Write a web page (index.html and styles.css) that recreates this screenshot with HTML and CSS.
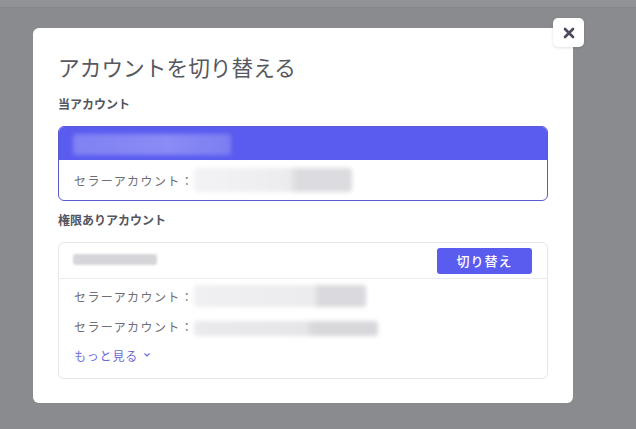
FILE: index.html
```html
<!DOCTYPE html>
<html lang="ja">
<head>
<meta charset="utf-8">
<link rel="stylesheet" href="styles.css">
</head>
<body>
<div class="topbar"></div>
<div class="stage">
  <div class="modal">
    <button class="close" aria-label="close">
      <svg width="12" height="12" viewBox="0 0 12 12"><path d="M2 2L10 10M10 2L2 10" stroke="#4a4a5a" stroke-width="2.6" stroke-linecap="round"/></svg>
    </button>
    <h1 class="title">アカウントを切り替える</h1>
    <div class="label">当アカウント</div>
    <div class="card current">
      <div class="card-head purple"><span class="blur blur-name"></span></div>
      <div class="row first"><span class="key">セラーアカウント：</span><span class="blur blur-a"></span></div>
    </div>
    <div class="label second">権限ありアカウント</div>
    <div class="card other">
      <div class="card-head plain">
        <span class="blur blur-gray"></span>
        <button class="switch">切り替え</button>
      </div>
      <div class="rows">
        <div class="row"><span class="key">セラーアカウント：</span><span class="blur blur-b"></span></div>
        <div class="row"><span class="key">セラーアカウント：</span><span class="blur blur-c"></span></div>
        <div class="more">もっと見る <svg width="8" height="6" viewBox="0 0 8 6"><path d="M1.5 1.5L4 4L6.5 1.5" fill="none" stroke="#6b6bd8" stroke-width="1.2"/></svg></div>
      </div>
    </div>
  </div>
</div>
</body>
</html>
```
FILE: styles.css
```css
html, body {
  margin: 0;
  padding: 0;
  background: #898b8f;
  width: 636px;
  height: 429px;
  overflow: hidden;
  font-family: "Noto Sans CJK JP", "Noto Sans", sans-serif;
}
.topbar {
  height: 7px;
  background: #909296;
  border-bottom: 1px solid #84868a;
}
.stage {
  padding: 20px 0 0 33px;
}
.modal {
  position: relative;
  width: 540px;
  height: 375px;
  box-sizing: border-box;
  background: #fff;
  border-radius: 6px;
  padding: 24px 25px 0 25px;
}
.close {
  position: absolute;
  top: -10px;
  right: -11px;
  width: 31px;
  height: 29px;
  border: none;
  border-radius: 5px;
  background: #fff;
  display: flex;
  align-items: center;
  justify-content: center;
  padding: 0;
  box-shadow: 0 1px 3px rgba(0,0,0,0.12);
}
.title {
  margin: 0;
  font-size: 21.7px;
  font-weight: 400;
  color: #58585f;
  line-height: 30px;
  height: 30px;
}
.label {
  margin-top: 14px;
  font-size: 12px;
  font-weight: 700;
  color: #55555f;
  line-height: 16px;
}
.label.second {
  margin-top: 11px;
}
.card {
  margin-top: 14px;
  border-radius: 6px;
  overflow: hidden;
  background: #fff;
}
.card.current {
  border: 1px solid #5b5bd0;
  height: 75px;
  box-sizing: border-box;
}
.card-head.purple {
  background: #5a5cf0;
  height: 33px;
  display: flex;
  align-items: center;
  padding-left: 14px;
}
.blur {
  display: inline-block;
  filter: blur(2px);
  border-radius: 3px;
}
.blur-name {
  width: 158px;
  height: 21px;
  background: linear-gradient(90deg, #8081f3, #8a8bf5 60%, #7c7df2);
  margin-top: 2px;
}
.row {
  display: flex;
  align-items: center;
  height: 30px;
  padding-left: 15px;
}
.row.first {
  height: 40px;
}
.key {
  font-size: 12px;
  color: #6e6e76;
  letter-spacing: 1.4px;
}
.blur-a {
  width: 158px;
  height: 24px;
  background: linear-gradient(90deg, #f3f3f5 0%, #ececef 60%, #dcdce0 65%, #dcdce0 100%);
}
.card.other {
  margin-top: 14px;
  border: 1px solid #e6e6ea;
  height: 137px;
  box-sizing: border-box;
}
.card-head.plain {
  height: 35px;
  display: flex;
  align-items: center;
  justify-content: space-between;
  padding: 0 15px 0 14px;
  border-bottom: 1px solid #ececf0;
}
.blur-gray {
  width: 84px;
  height: 11px;
  background: #d6d6da;
  filter: blur(1px);
  margin-top: -3px;
}
.switch {
  width: 95px;
  height: 26px;
  border: none;
  border-radius: 3px;
  background: #5a5cf0;
  color: #fff;
  font-family: "Noto Sans CJK JP", sans-serif;
  font-size: 13px;
  font-weight: 500;
  letter-spacing: 1px;
  padding: 0;
}
.rows {
  padding-top: 2px;
}
.blur-b {
  width: 172px;
  height: 22px;
  background: linear-gradient(90deg, #f0f0f2 0%, #ececef 70%, #dadade 72%, #dadade 100%);
}
.blur-c {
  width: 184px;
  height: 15px;
  background: linear-gradient(90deg, #eaeaed 0%, #e6e6e9 60%, #d8d8dc 65%, #d8d8dc 100%);
  margin-top: 4px;
}
.more {
  display: flex;
  align-items: center;
  gap: 5px;
  padding-left: 15px;
  height: 28px;
  font-size: 12px;
  color: #6b6bd8;
  letter-spacing: 0.8px;
}
```
